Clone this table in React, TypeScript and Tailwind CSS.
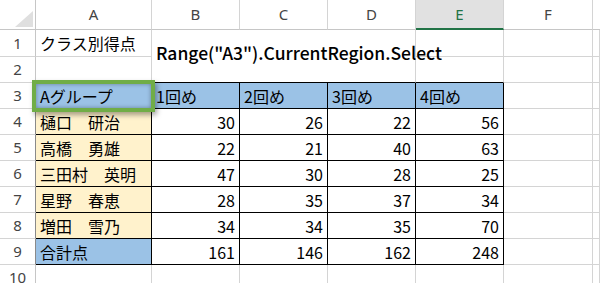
import React from "react";

const FONT = { fontFamily: '"Noto Sans CJK JP", "Noto Sans", sans-serif' };

const names = ["樋口　研治", "高橋　勇雄", "三田村　英明", "星野　春恵", "増田　雪乃"];
const scores = [
  [30, 26, 22, 56],
  [22, 21, 40, 63],
  [47, 30, 28, 25],
  [28, 35, 37, 34],
  [34, 34, 35, 70],
];
const totals = [161, 146, 162, 248];

function Cell({ t, num, bg, black, bottomBlack }: { t?: string; num?: boolean; bg?: string; black?: boolean; bottomBlack?: boolean }) {
  const br = black ? "border-r-black" : "border-r-[#d4d4d4]";
  const bb = black || bottomBlack ? "border-b-black" : "border-b-[#d4d4d4]";
  return (
    <div
      className={`flex items-center border-r border-b whitespace-nowrap text-[16px] font-normal text-black ${br} ${bb} ${bg ?? ""} ${num ? "justify-end pr-[4px]" : "pl-[4px]"}`}
    >
      {t}
    </div>
  );
}

function RowNum({ n, table }: { n: number; table?: boolean }) {
  return (
    <div
      className={`flex items-center justify-center border-b border-r text-[15px] text-[#444] ${table ? "border-r-[#8a8a8a]" : "border-r-[#c6c6c6]"} border-b-[#d4d4d4]`}
      style={{ fontFamily: '"Noto Sans", sans-serif' }}
    >
      {n}
    </div>
  );
}

function ColHead({ l, sel }: { l: string; sel?: boolean }) {
  return (
    <div
      className={`flex items-center justify-center border-r border-r-[#d4d4d4] text-[15px] ${sel ? "bg-[#e1e1e1] text-[#217346] border-b-2 border-b-[#217346]" : "bg-white text-[#444] border-b border-b-[#c6c6c6]"}`}
      style={{ fontFamily: '"Noto Sans", sans-serif' }}
    >
      {l}
    </div>
  );
}

export default function App() {
  const blue = "bg-[#9bc2e6]";
  const peach = "bg-[#fff2cc]";
  return (
    <div className="w-[600px] h-[283px] overflow-hidden bg-white relative" style={FONT}>
      <div className="grid grid-cols-[36px_116px_88px_88px_88px_88px_89px_1fr] grid-rows-[30px_27px_26px_26px_26px_26px_26px_26px_26px_26px_26px]">
        {/* header row */}
        <div className="relative border-r border-b border-r-[#c6c6c6] border-b-[#c6c6c6] bg-white">
          <svg className="absolute left-[15px] top-[11px]" width="18" height="16" viewBox="0 0 18 16">
            <polygon points="18,0 18,16 0,16" fill="#dfdfdf" />
          </svg>
        </div>
        <ColHead l="A" />
        <ColHead l="B" />
        <ColHead l="C" />
        <ColHead l="D" />
        <ColHead l="E" sel />
        <ColHead l="F" />
        <div className="border-b border-b-[#c6c6c6]" />

        {/* row 1 */}
        <RowNum n={1} />
        <Cell t="クラス別得点" />
        <div className="col-span-3 row-span-2 flex items-center pl-[4px] pb-[6px] border-r border-b border-r-[#d4d4d4] border-b-black whitespace-nowrap text-[17.5px] font-medium text-black relative z-10 overflow-visible">
          Range("A3").CurrentRegion.Select
        </div>
        <Cell />
        <Cell />
        <Cell />

        {/* row 2 */}
        <RowNum n={2} />
        <Cell bottomBlack />
        <Cell bottomBlack />
        <Cell />
        <Cell />

        {/* row 3 */}
        <RowNum n={3} table />
        <Cell t="Aグループ" bg={blue} black />
        <Cell t="1回め" bg={blue} black />
        <Cell t="2回め" bg={blue} black />
        <Cell t="3回め" bg={blue} black />
        <Cell t="4回め" bg={blue} black />
        <Cell />
        <Cell />

        {names.map((nm, i) => (
          <React.Fragment key={nm}>
            <RowNum n={4 + i} table />
            <Cell t={nm} bg={peach} black />
            {scores[i].map((s, j) => (
              <Cell key={j} t={String(s)} num black />
            ))}
            <Cell />
            <Cell />
          </React.Fragment>
        ))}

        {/* row 9 */}
        <RowNum n={9} table />
        <Cell t="合計点" bg={blue} black />
        {totals.map((s, j) => (
          <Cell key={j} t={String(s)} num black />
        ))}
        <Cell />
        <Cell />

        {/* row 10 */}
        <RowNum n={10} />
        <Cell />
        <Cell />
        <Cell />
        <Cell />
        <Cell />
        <Cell />
        <Cell />
      </div>

      {/* selection box around A3 */}
      <div className="absolute left-[32px] top-[80px] w-[123px] h-[32px] border-[4px] border-[#70ad47] shadow-[2px_3px_5px_rgba(0,0,0,0.35),inset_0_0_4px_rgba(0,0,0,0.35)] pointer-events-none z-20" />
    </div>
  );
}
